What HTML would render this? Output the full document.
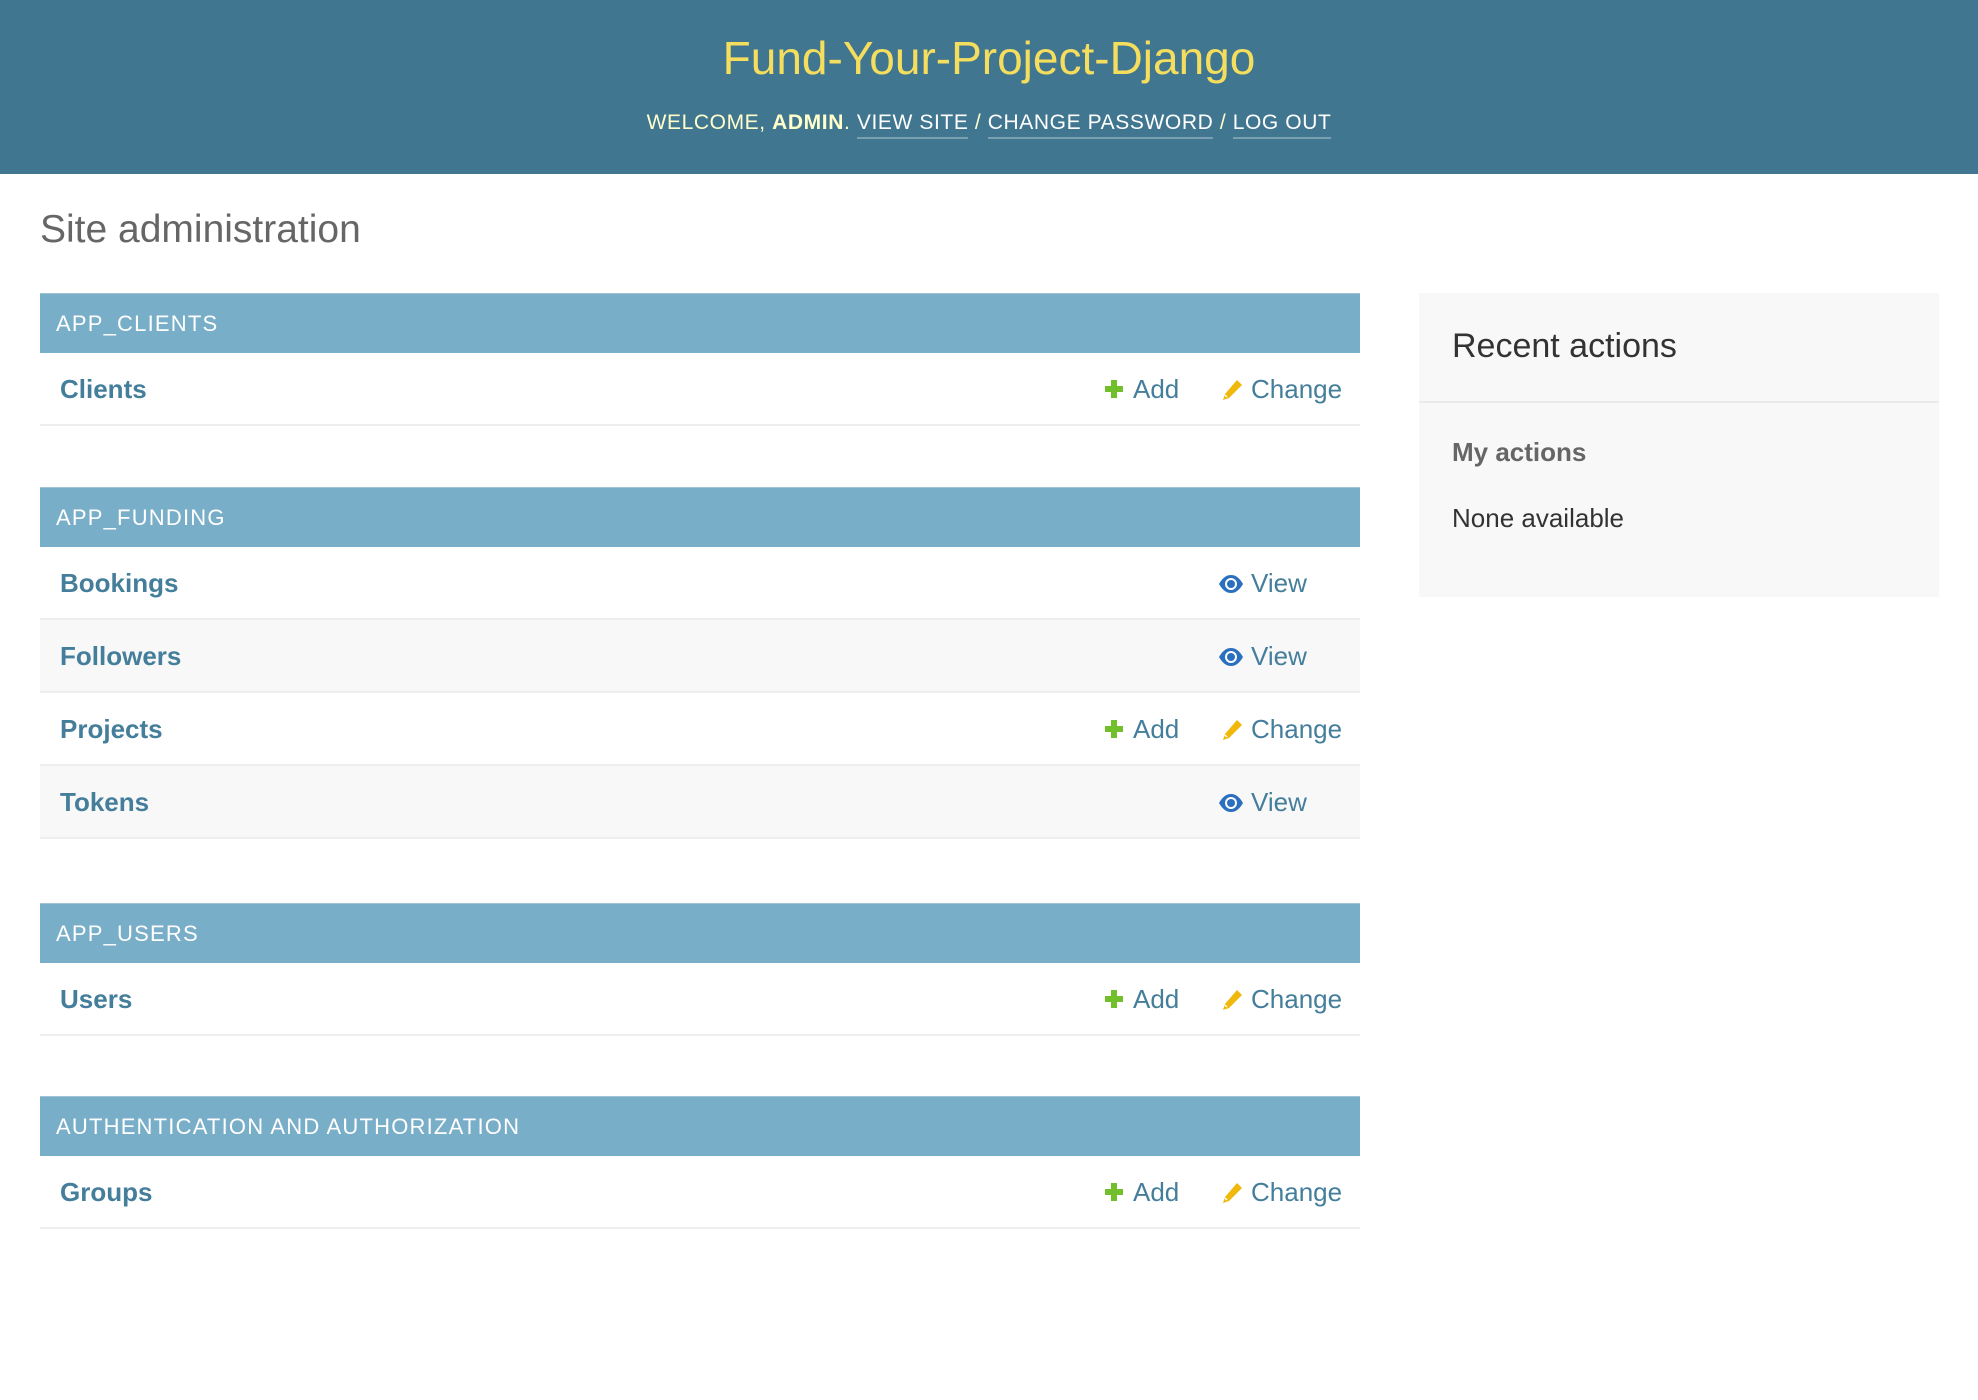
<!DOCTYPE html>
<html><head><meta charset="utf-8"><style>
*{margin:0;padding:0;box-sizing:border-box}
body{width:1978px;height:1400px;background:#fff;font-family:"Liberation Sans",sans-serif;position:relative;overflow:hidden}
#hdr{position:absolute;left:0;top:0;width:1978px;height:174px;background:#417690;text-align:center}
#hdr h1{position:absolute;left:0;right:0;top:29px;font-size:46px;font-weight:normal;color:#f5dd5d;line-height:58px}
#tools{position:absolute;left:0;right:0;top:110px;font-size:21px;color:#ffc;letter-spacing:.6px;line-height:26px}
#tools a{color:#fff;text-decoration:none;border-bottom:2px solid rgba(255,255,255,.3);padding-bottom:3px}
h2.site{position:absolute;left:40px;top:207px;font-size:39px;font-weight:normal;color:#666;line-height:46px}
.mod{position:absolute;left:40px;width:1320px}
.cap{height:60px;background:#79aec8;color:#fff;font-size:22px;letter-spacing:1.2px;padding-left:16px;line-height:60px;border-top:1px solid #9ec4d6}
.row{height:73px;border-bottom:2px solid #eee;position:relative;background:#fff}
.row.alt{background:#f8f8f8}
.row .n{position:absolute;left:20px;top:1px;line-height:71px;font-size:26px;font-weight:bold;color:#447e9b}
.act{position:absolute;top:1px;line-height:71px;font-size:26px;color:#447e9b}
.act svg{position:absolute;top:24px}
.add{left:1064px;padding-left:29px}
.chg{left:1180px;padding-left:31px}
.view{left:1178px;padding-left:33px}
#recent{position:absolute;left:1419px;top:293px;width:520px;height:304px;background:#f8f8f8}
#recent h2{position:absolute;left:33px;top:31px;font-size:34px;font-weight:normal;color:#333;line-height:44px}
#recent .hr{position:absolute;left:0;right:0;top:108px;height:2px;background:#eaeaea}
#recent h3{position:absolute;left:33px;top:144px;font-size:26px;font-weight:bold;color:#666;line-height:30px}
#recent p{position:absolute;left:33px;top:210px;font-size:26px;color:#333;line-height:30px}
</style></head><body>
<div id="hdr"><h1>Fund-Your-Project-Django</h1>
<div id="tools">WELCOME, <b>ADMIN</b>. <a>VIEW SITE</a> / <a>CHANGE PASSWORD</a> / <a>LOG OUT</a></div></div>
<h2 class="site">Site administration</h2>

<div class="mod" style="top:293px">
<div class="cap">APP_CLIENTS</div>
<div class="row"><span class="n">Clients</span>
<span class="act add"><svg width="20" height="22" viewBox="0 0 20 20" style="left:0"><path d="M7 1h6v6h6v6h-6v6H7v-6H1V7h6z" fill="#70bf2b"/></svg>Add</span>
<span class="act chg"><svg width="24" height="24" viewBox="0 0 24 24" style="left:0"><path d="M17 2l5 5-13 13-6 2 2-6z" fill="#efb80b"/><path d="M5 17l2 2" stroke="#fff" stroke-width="1.5"/></svg>Change</span></div>
</div>

<div class="mod" style="top:487px">
<div class="cap">APP_FUNDING</div>
<div class="row"><span class="n">Bookings</span><span class="act view"><svg width="26" height="20" viewBox="0 0 26 20" style="left:0;top:26px"><path d="M1 10C5 3 9 1 13 1s8 2 12 9c-4 7-8 9-12 9S5 17 1 10z" fill="#2b70bf"/><circle cx="13" cy="10" r="6" fill="#fff"/><circle cx="13" cy="10" r="4" fill="#2b70bf"/></svg>View</span></div>
<div class="row alt"><span class="n">Followers</span><span class="act view"><svg width="26" height="20" viewBox="0 0 26 20" style="left:0;top:26px"><path d="M1 10C5 3 9 1 13 1s8 2 12 9c-4 7-8 9-12 9S5 17 1 10z" fill="#2b70bf"/><circle cx="13" cy="10" r="6" fill="#fff"/><circle cx="13" cy="10" r="4" fill="#2b70bf"/></svg>View</span></div>
<div class="row"><span class="n">Projects</span>
<span class="act add"><svg width="20" height="22" viewBox="0 0 20 20" style="left:0"><path d="M7 1h6v6h6v6h-6v6H7v-6H1V7h6z" fill="#70bf2b"/></svg>Add</span>
<span class="act chg"><svg width="24" height="24" viewBox="0 0 24 24" style="left:0"><path d="M17 2l5 5-13 13-6 2 2-6z" fill="#efb80b"/><path d="M5 17l2 2" stroke="#fff" stroke-width="1.5"/></svg>Change</span></div>
<div class="row alt"><span class="n">Tokens</span><span class="act view"><svg width="26" height="20" viewBox="0 0 26 20" style="left:0;top:26px"><path d="M1 10C5 3 9 1 13 1s8 2 12 9c-4 7-8 9-12 9S5 17 1 10z" fill="#2b70bf"/><circle cx="13" cy="10" r="6" fill="#fff"/><circle cx="13" cy="10" r="4" fill="#2b70bf"/></svg>View</span></div>
</div>

<div class="mod" style="top:903px">
<div class="cap">APP_USERS</div>
<div class="row"><span class="n">Users</span>
<span class="act add"><svg width="20" height="22" viewBox="0 0 20 20" style="left:0"><path d="M7 1h6v6h6v6h-6v6H7v-6H1V7h6z" fill="#70bf2b"/></svg>Add</span>
<span class="act chg"><svg width="24" height="24" viewBox="0 0 24 24" style="left:0"><path d="M17 2l5 5-13 13-6 2 2-6z" fill="#efb80b"/><path d="M5 17l2 2" stroke="#fff" stroke-width="1.5"/></svg>Change</span></div>
</div>

<div class="mod" style="top:1096px">
<div class="cap">AUTHENTICATION AND AUTHORIZATION</div>
<div class="row"><span class="n">Groups</span>
<span class="act add"><svg width="20" height="22" viewBox="0 0 20 20" style="left:0"><path d="M7 1h6v6h6v6h-6v6H7v-6H1V7h6z" fill="#70bf2b"/></svg>Add</span>
<span class="act chg"><svg width="24" height="24" viewBox="0 0 24 24" style="left:0"><path d="M17 2l5 5-13 13-6 2 2-6z" fill="#efb80b"/><path d="M5 17l2 2" stroke="#fff" stroke-width="1.5"/></svg>Change</span></div>
</div>

<div id="recent"><h2>Recent actions</h2><div class="hr"></div><h3>My actions</h3><p>None available</p></div>
</body></html>
